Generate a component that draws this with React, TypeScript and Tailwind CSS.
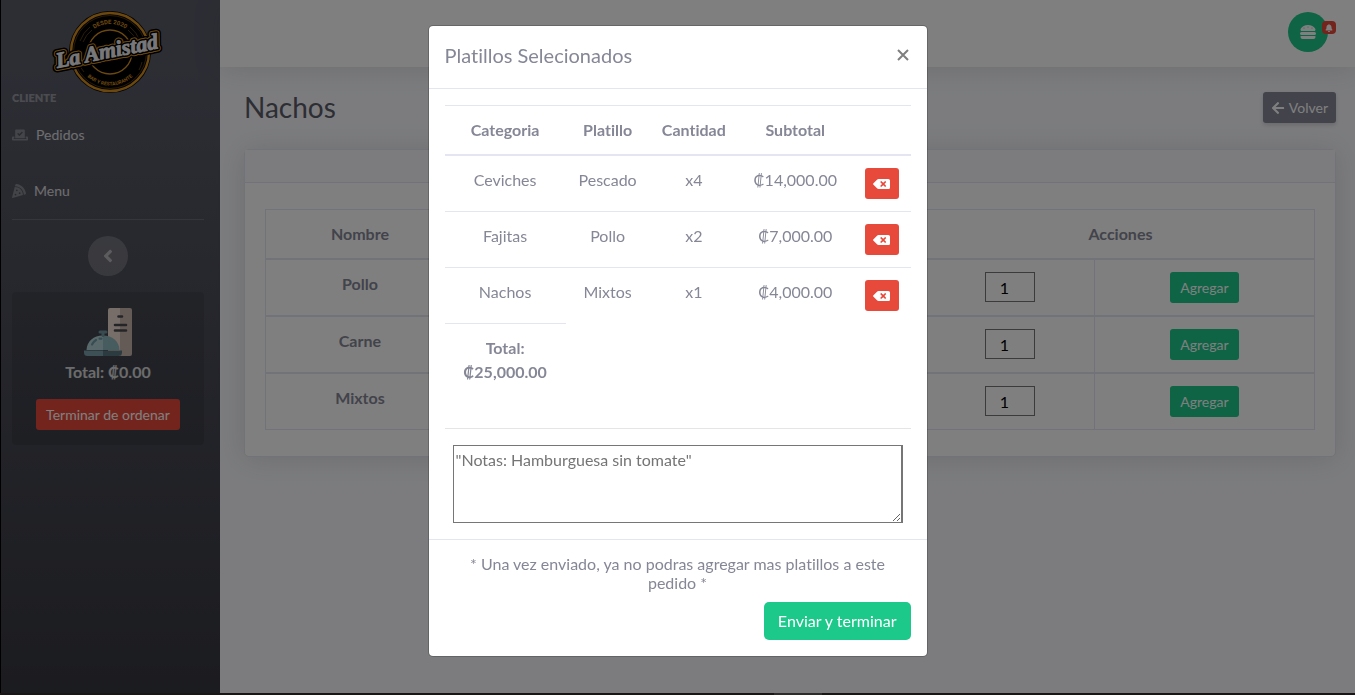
import React from "react";
import {
  FaAngleLeft,
  FaArrowLeft,
  FaBackspace,
  FaBell,
  FaHamburger,
  FaPizzaSlice,
  FaVoteYea,
} from "react-icons/fa";

const selected = [
  { categoria: "Ceviches", platillo: "Pescado", cantidad: "x4", subtotal: "₡14,000.00" },
  { categoria: "Fajitas", platillo: "Pollo", cantidad: "x2", subtotal: "₡7,000.00" },
  { categoria: "Nachos", platillo: "Mixtos", cantidad: "x1", subtotal: "₡4,000.00" },
];

const dishes = ["Pollo", "Carne", "Mixtos"];

function Logo() {
  return (
    <svg viewBox="0 0 116 84" className="h-[84px] w-[116px] overflow-visible" role="img" aria-label="La Amistad">
      <defs>
        <path id="arc-top" d="M32 42 a28 28 0 0 1 56 0" />
        <path id="arc-bottom" d="M26.500 42 a33.500 33.500 0 0 0 67 0" />
      </defs>
      <circle cx="60" cy="42" r="41" fill="#000" />
      <circle cx="60" cy="42" r="39" fill="none" stroke="#d8901f" strokeWidth="2.4" />
      <circle cx="60" cy="42" r="36.5" fill="none" stroke="#8a5a14" strokeWidth="0.6" />
      <circle cx="60" cy="42" r="22" fill="none" stroke="#d8901f" strokeWidth="1.3" />
      <path
        d="M30 31a32 32 0 0 1 10-14M33 32a29 29 0 0 1 9-12M80 17a32 32 0 0 1 10 14M78 20a29 29 0 0 1 9 12M28 52a32 32 0 0 0 6 10M92 52a32 32 0 0 1 -3 8"
        fill="none"
        stroke="#6b4a16"
        strokeWidth="0.8"
      />
      <text fill="#d8901f" className="font-['Roboto',sans-serif] text-[6px] font-bold">
        <textPath href="#arc-top" startOffset="50%" textAnchor="middle">DESDE 2020</textPath>
      </text>
      <text fill="#d8901f" className="font-['Roboto',sans-serif] text-[5px] font-bold">
        <textPath href="#arc-bottom" startOffset="50%" textAnchor="middle">BAR Y RESTAURANTE</textPath>
      </text>
      <g
        transform="rotate(-11 58 42)"
        className="font-['Liberation_Serif',serif] text-[22px] font-bold italic"
        textAnchor="middle"
        strokeLinejoin="round"
      >
        <text x="57" y="48" fill="#000" stroke="#000" strokeWidth="9">La Amistad</text>
        <text x="57" y="48" fill="#d8901f" stroke="#d8901f" strokeWidth="6">La Amistad</text>
        <text x="57" y="48" fill="#000" stroke="#000" strokeWidth="4">La Amistad</text>
        <text x="57" y="48" fill="#f1f1f4" stroke="#f1f1f4" strokeWidth="0.9">La Amistad</text>
      </g>
    </svg>
  );
}

function ServiceIcon() {
  return (
    <svg viewBox="0 0 48 48" className="size-12" aria-hidden="true">
      <path d="M26 0h11v48H26a2 2 0 0 1-2-2V2a2 2 0 0 1 2-2z" fill="#efdcd4" />
      <path d="M36 0h10a2 2 0 0 1 2 2v44a2 2 0 0 1-2 2H36z" fill="#c9b4ac" />
      <path d="M34.500 8.500h3.500M31 17h11M31 22.500h11" stroke="#4b4b50" strokeWidth="2.600" strokeLinecap="round" />
      <path d="M2.500 42C3 33 9.500 27.500 19 27.500V42z" fill="#b3d3d6" />
      <path d="M19 27.500C28.500 27.500 35 33 35.500 42H19z" fill="#8fb8bc" />
      <path d="M16 24h6M19 24v3.500" stroke="#7096a0" strokeWidth="3" strokeLinecap="round" />
      <path d="M8 36.500q1.500-3 4-4.500M15.500 30.700h2" stroke="#6f9ba4" strokeWidth="2.200" strokeLinecap="round" fill="none" />
      <path d="M0 42.500h19V48H3.500A3.500 3.500 0 0 1 0 44.500z" fill="#7ba0aa" />
      <path d="M19 42.500h19v2a3.500 3.500 0 0 1-3.500 3.500H19z" fill="#587681" />
    </svg>
  );
}

function Sidebar() {
  return (
    <aside className="flex w-[220px] shrink-0 flex-col border-l border-black bg-linear-to-b from-[#5a5c69] from-10% to-[#373840] pr-4 pl-[11px] text-white">
      <a href="#inicio" className="mt-[10px] flex justify-center">
        <Logo />
      </a>
      <h2 className="-mt-1 h-4 text-[11px] leading-4 font-extrabold text-white/40">CLIENTE</h2>
      <nav className="flex flex-col pt-[18px] text-sm leading-[22px] text-white/80">
        <a href="#pedidos" className="flex items-center gap-2">
          <FaVoteYea className="h-[14px] w-4 text-white/30" />
          Pedidos
        </a>
        <a href="#menu" className="mt-[34px] flex items-center gap-2">
          <FaPizzaSlice className="size-[14px] text-white/30" />
          Menu
        </a>
      </nav>
      <hr className="mt-[17px] border-white/15" />
      <button
        type="button"
        aria-label="Contraer menú"
        className="mt-4 flex size-10 items-center justify-center self-center rounded-full bg-white/20 text-white/50"
      >
        <FaAngleLeft className="size-5" />
      </button>
      <section className="mt-4 flex flex-col items-center rounded bg-black/10 p-4 pb-[15px]">
        <ServiceIcon />
        <p className="mb-[15px] pt-1 leading-6 font-bold text-white/80">Total: ₡0.00</p>
        <button type="button" className="h-[31px] rounded-[3px] bg-[#e74a3b] px-[10px] text-sm">
          Terminar de ordenar
        </button>
      </section>
    </aside>
  );
}

function DishTable() {
  return (
    <table className="w-full table-fixed border-collapse border border-[#e3e6f0] text-center">
      <colgroup>
        <col className="w-[18%]" />
        <col />
        <col className="w-[16%]" />
        <col className="w-[21%]" />
      </colgroup>
      <thead>
        <tr className="border-b-2 border-[#e3e6f0]">
          <th className="border-r border-[#e3e6f0] p-3 font-bold">Nombre</th>
          <th className="border-r border-[#e3e6f0]" />
          <th colSpan={2} className="p-3 font-bold">Acciones</th>
        </tr>
      </thead>
      <tbody>
        {dishes.map((dish) => (
          <tr key={dish} className="border-b-2 border-[#e3e6f0] align-top last:border-b">
            <th className="border-r border-[#e3e6f0] p-3 font-bold">{dish}</th>
            <td className="border-r border-[#e3e6f0]" />
            <td className="border-r border-[#e3e6f0] p-3">
              <input
                aria-label={"Cantidad de " + dish}
                defaultValue="1"
                className="mx-auto block h-[30px] w-[50px] border border-[#767676] pr-6 pl-3 text-center text-black"
              />
            </td>
            <td className="p-3">
              <button type="button" className="mx-auto block h-[31px] rounded-[3px] bg-[#1cc88a] px-[10px] text-sm text-white">
                Agregar
              </button>
            </td>
          </tr>
        ))}
      </tbody>
    </table>
  );
}

function OrderDialog() {
  return (
    <div
      role="dialog"
      aria-modal="true"
      aria-labelledby="order-title"
      className="w-full max-w-[500px] rounded-[5px] border border-black/20 bg-white bg-clip-padding"
    >
      <header className="flex items-center justify-between border-b border-[#e3e6f0] px-4 pt-[15px] pb-[19px]">
        <h2 id="order-title" className="text-xl leading-7">Platillos Selecionados</h2>
        <button type="button" aria-label="Cerrar" className="flex size-4 items-center justify-center text-[#7f7f7f]">
          <svg viewBox="0 0 12 12" className="size-3" aria-hidden="true">
            <path d="M1 1l10 10M11 1L1 11" stroke="currentColor" strokeWidth="2" />
          </svg>
        </button>
      </header>
      <div className="p-4">
        <table className="w-full table-fixed border-collapse text-center">
          <colgroup>
            <col className="w-[26%]" />
            <col className="w-[18%]" />
            <col className="w-[19%]" />
            <col />
            <col className="w-[58px]" />
          </colgroup>
          <thead>
            <tr className="border-t border-b-2 border-[#e3e6f0]">
              <th className="py-3 font-bold">Categoria</th>
              <th className="py-3 font-bold">Platillo</th>
              <th className="py-3 font-bold">Cantidad</th>
              <th className="py-3 font-bold">Subtotal</th>
              <td />
            </tr>
          </thead>
          <tbody>
            {selected.map((row, i) => (
              <tr
                key={row.categoria}
                className={i < selected.length - 1 ? "border-b border-[#e3e6f0] align-top" : "align-top"}
              >
                <td className="py-3">{row.categoria}</td>
                <td className="py-3">{row.platillo}</td>
                <td className="py-3">{row.cantidad}</td>
                <td className="py-3">{row.subtotal}</td>
                <td className="p-3">
                  <button
                    type="button"
                    aria-label={"Eliminar " + row.platillo}
                    className="flex h-[31px] w-[34px] items-center justify-center rounded-[3px] bg-[#e74a3b] text-white"
                  >
                    <FaBackspace className="h-[14px] w-[17px]" />
                  </button>
                </td>
              </tr>
            ))}
            <tr>
              <th className="border-t border-[#e3e6f0] p-3 font-bold">
                Total: ₡25,000.00
              </th>
            </tr>
          </tbody>
        </table>
        <hr className="mt-8 mb-4 border-black/10" />
        <div className="px-2">
          <textarea
            aria-label="Notas"
            rows={3}
            placeholder={'"Notas: Hamburguesa sin tomate"'}
            className="block h-[78px] w-full resize border border-r-2 border-[#767676] p-[2px] leading-6 placeholder:text-[#757575]"
          />
        </div>
      </div>
      <footer className="flex flex-col items-end gap-[10px] border-t border-[#e3e6f0] px-4 pt-[14px] pb-4">
        <p className="w-full text-center leading-[19px]">
          * Una vez enviado, ya no podras agregar mas platillos a este pedido *
        </p>
        <button type="button" className="h-[38px] rounded-[5px] bg-[#1cc88a] px-[14px] text-white">
          Enviar y terminar
        </button>
      </footer>
    </div>
  );
}

export default function App() {
  return (
    <div className="flex min-h-screen flex-col bg-[#f8f9fc] font-['Lato','Noto_Sans',sans-serif] text-base text-[#858796] [font-variant-ligatures:no-common-ligatures]">
      <div className="flex grow">
        <Sidebar />
        <div className="flex min-w-0 grow flex-col">
          <header className="flex h-[67px] items-start justify-end bg-white pt-3 pr-[27px] shadow-[0_2px_28px_rgba(58,59,69,0.15)]">
            <button
              type="button"
              aria-label="Platillos seleccionados"
              className="relative flex size-10 items-center justify-center rounded-full bg-[#1cc88a] text-white"
            >
              <FaHamburger className="size-4" />
              <span className="absolute top-[9px] -right-2 flex h-[13px] w-[14px] items-center justify-center rounded-[4px] bg-[#e74a3b]">
                <FaBell className="size-2" />
              </span>
            </button>
          </header>
          <main className="pt-6 pr-[19px] pl-6">
            <div className="mb-6 flex h-[34px] items-start justify-between">
              <h1 className="text-[28px] leading-8 text-[#5a5c69]">Nachos</h1>
              <a
                href="#volver"
                className="mt-px flex h-[31px] items-center gap-1 rounded-[3px] bg-[#858796] px-2 text-sm text-white shadow-[0_2px_4px_rgba(58,59,69,0.2)]"
              >
                <FaArrowLeft className="size-[14px]" />
                Volver
              </a>
            </div>
            <section className="rounded-[5px] border border-[#e3e6f0] bg-white shadow-[0_2px_28px_rgba(58,59,69,0.15)]">
              <div className="h-[33px] border-b border-[#e3e6f0] bg-[#f8f9fc]" />
              <div className="px-5 pt-[26px] pb-[26px]">
                <DishTable />
              </div>
            </section>
          </main>
        </div>
      </div>
      <div className="flex h-0.5 justify-center bg-[#342c2d] pl-60">
        <div className="w-12 bg-[#5c5657]" />
      </div>
      <div className="fixed inset-0 flex flex-col items-center overflow-y-auto bg-black/50 pt-[25px]">
        <OrderDialog />
      </div>
    </div>
  );
}
